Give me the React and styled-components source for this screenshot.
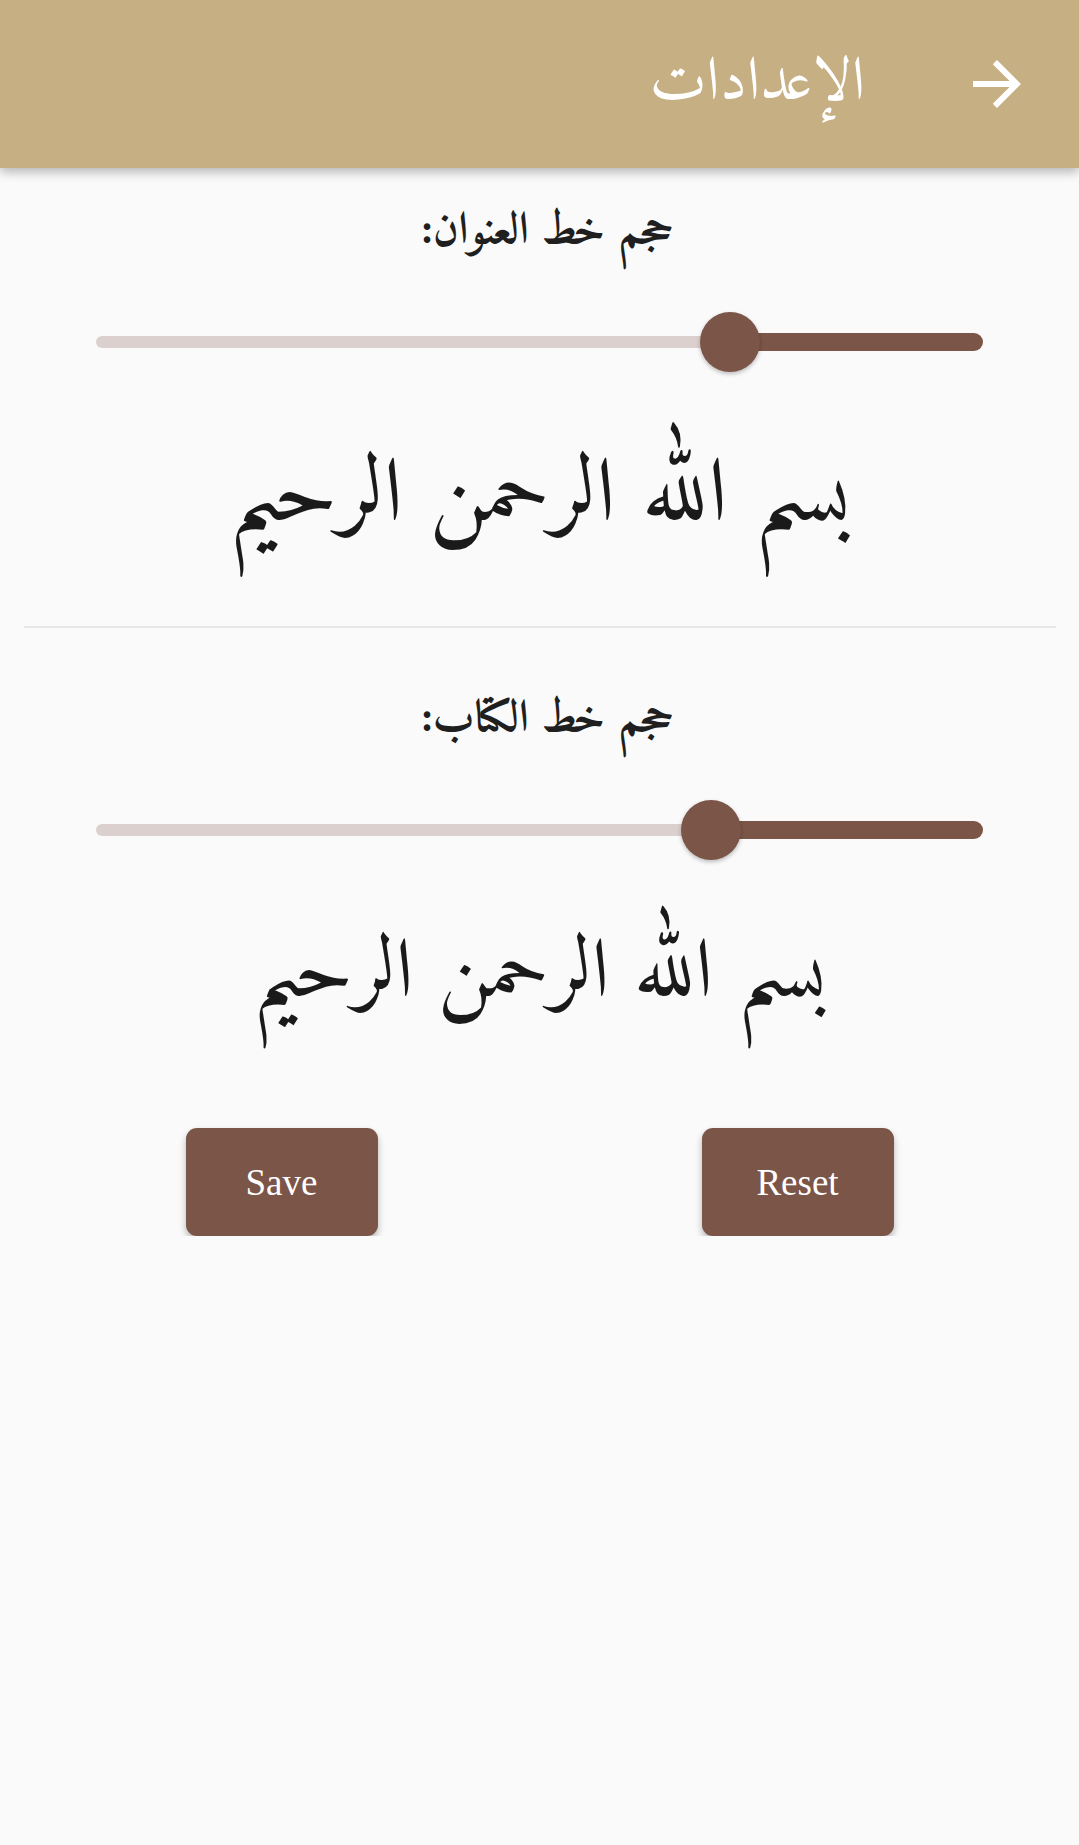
import React from "react"
import styled, { createGlobalStyle } from "styled-components"

// ------------------------------
// Global page styles
// ------------------------------
const GlobalStyle = createGlobalStyle`
  html, body {
    margin: 0;
    padding: 0;
    background: #fafafa;
  }
  body {
    font-family: "Amiri", "Noto Naskh Arabic", "DejaVu Sans", serif;
    color: #1f1f1f;
  }
`

const ARABIC = `"Amiri", "Noto Naskh Arabic", "Noto Sans Arabic", "DejaVu Sans", serif`

// ------------------------------
// Header bar
// ------------------------------
const AppBar = styled.header`
  height: 168px;
  background: #c7af84;
  box-shadow: 0 4px 10px rgba(0, 0, 0, 0.28);
  display: flex;
  flex-direction: row-reverse;
  align-items: center;
  padding-right: 46px;
  gap: 96px;
  position: relative;
  z-index: 2;
`

const BackButton = styled.button`
  width: 72px;
  height: 72px;
  padding: 0;
  border: none;
  background: transparent;
  display: grid;
  place-items: center;
  color: #ffffff;
  cursor: pointer;
`

const Title = styled.h1`
  margin: 0;
  font-family: ${ARABIC};
  font-weight: 400;
  font-size: 61px;
  color: #ffffff;
  direction: rtl;
`

// ------------------------------
// Settings sections
// ------------------------------
const Page = styled.main`
  display: flex;
  flex-direction: column;
  align-items: stretch;
`

const Section = styled.section`
  display: flex;
  flex-direction: column;
  padding-top: ${p => p.$top}px;
`

const Label = styled.div`
  height: 108px;
  display: flex;
  align-items: center;
  justify-content: center;
  font-family: ${ARABIC};
  font-weight: 700;
  font-size: 45px;
  direction: rtl;
  padding-left: 16px;
`

const SliderRow = styled.div`
  height: 112px;
  display: flex;
  align-items: center;
  padding: 0 96px;
`

const Track = styled.div`
  position: relative;
  flex: 1;
  height: 18px;
  display: flex;
  align-items: center;
`

const Inactive = styled.div`
  height: 12px;
  background: #dbd0cd;
  border-radius: 6px 0 0 6px;
`

const Active = styled.div`
  flex: 1;
  height: 18px;
  background: #7b5548;
  border-radius: 0 9px 9px 0;
`

const Thumb = styled.div`
  position: absolute;
  top: 50%;
  width: 60px;
  height: 60px;
  margin-left: -30px;
  margin-top: -30px;
  border-radius: 50%;
  background: #7b5548;
  box-shadow: 0 2px 4px rgba(0, 0, 0, 0.25);
`

const Preview = styled.div`
  height: ${p => p.$height}px;
  display: flex;
  align-items: center;
  justify-content: center;
  font-family: ${ARABIC};
  font-size: ${p => p.$size}px;
  direction: rtl;
  color: #1a1a1a;
`

const Divider = styled.hr`
  margin: 28px 23px 0 24px;
  border: none;
  height: 2px;
  background: #e6e6e6;
`

// ------------------------------
// Buttons
// ------------------------------
const ButtonRow = styled.div`
  display: flex;
  justify-content: center;
  gap: 324px;
  margin-top: 62px;
`

const ActionButton = styled.button`
  width: 192px;
  height: 108px;
  border: none;
  border-radius: 11px;
  background: #7b5548;
  color: #ffffff;
  font-family: "Liberation Serif", "Times New Roman", serif;
  font-size: 37px;
  box-shadow: 0 4px 7px rgba(0, 0, 0, 0.28);
  cursor: pointer;
`

function ArrowForward() {
  return (
    <svg width="72" height="72" viewBox="0 0 24 24" fill="currentColor">
      <path d="M12 4l-1.41 1.41L16.17 11H4v2h12.17l-5.58 5.59L12 20l8-8z" />
    </svg>
  )
}

function FontSlider({ value }) {
  const pct = value * 100
  return (
    <SliderRow>
      <Track>
        <Inactive style={{ width: `${pct}%` }} />
        <Active />
        <Thumb style={{ left: `${pct}%` }} />
      </Track>
    </SliderRow>
  )
}

const BASMALA = "بسم الله الرحمن الرحيم"

export default function App() {
  return (
    <>
      <GlobalStyle />
      <AppBar>
        <BackButton aria-label="back">
          <ArrowForward />
        </BackButton>
        <Title>الإعدادات</Title>
      </AppBar>
      <Page>
        <Section $top={10}>
          <Label>حجم خط العنوان:</Label>
          <FontSlider value={0.715} />
          <Preview $height={200} $size={90}>{BASMALA}</Preview>
        </Section>
        <Divider />
        <Section $top={38}>
          <Label>حجم خط الكتاب:</Label>
          <FontSlider value={0.693} />
          <Preview $height={180} $size={83}>{BASMALA}</Preview>
        </Section>
        <ButtonRow>
          <ActionButton>Save</ActionButton>
          <ActionButton>Reset</ActionButton>
        </ButtonRow>
      </Page>
    </>
  )
}
